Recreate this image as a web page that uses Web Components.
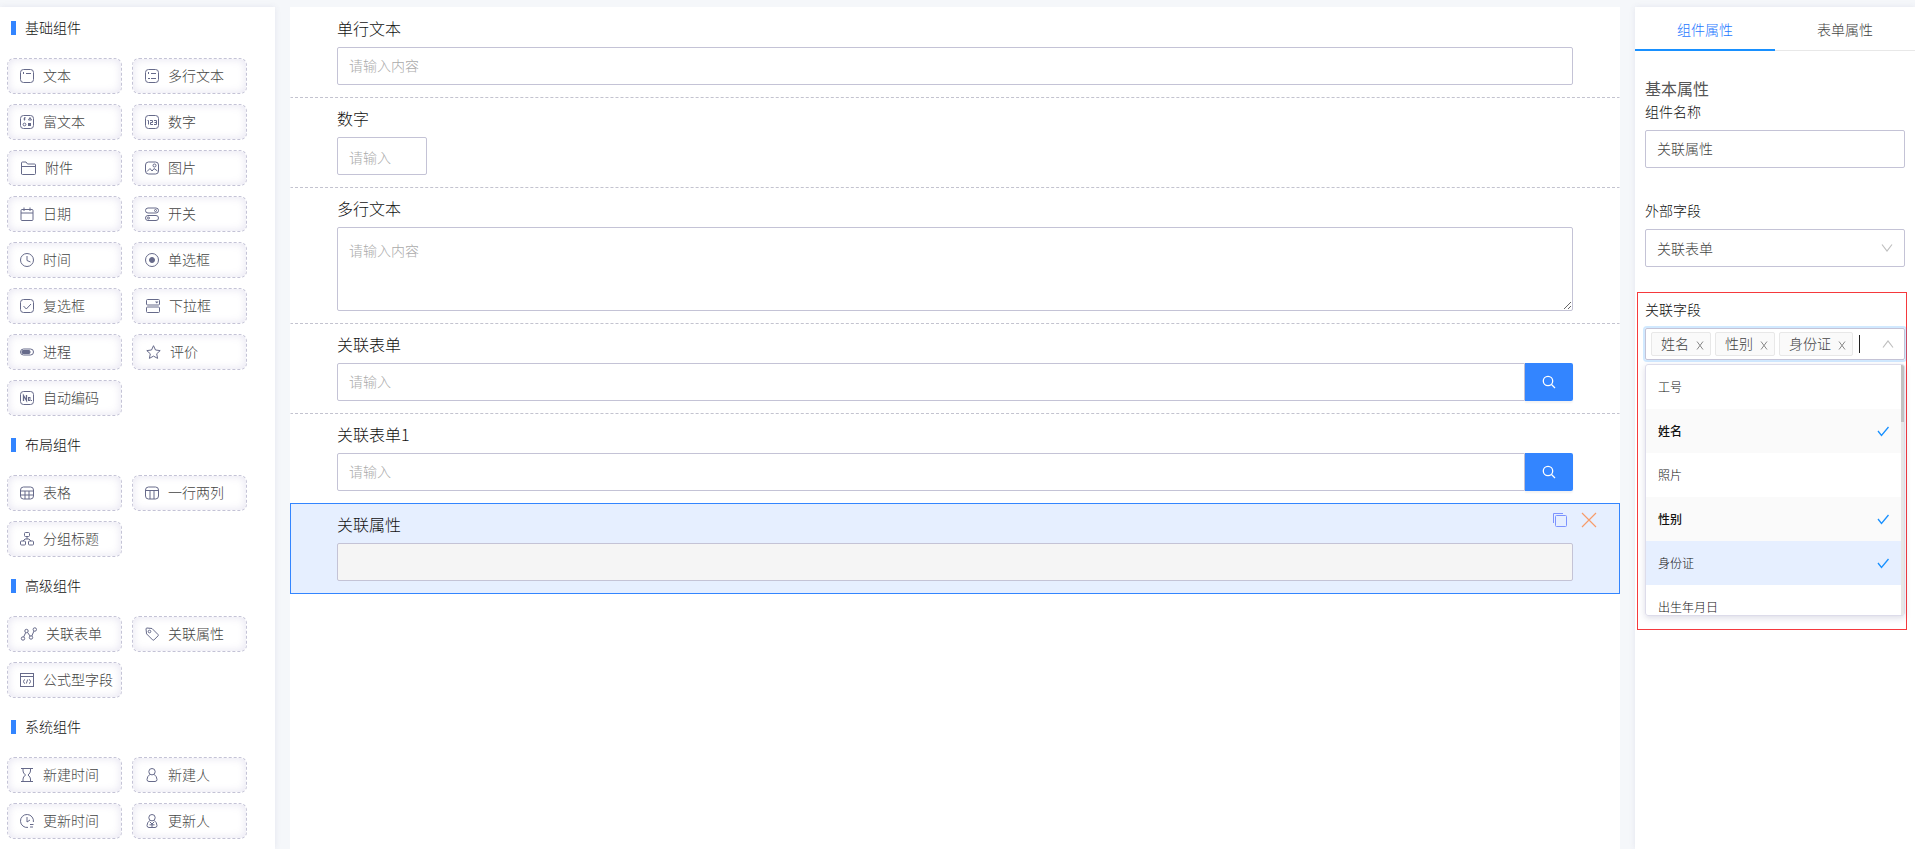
<!DOCTYPE html>
<html lang="zh-CN">
<head>
<meta charset="utf-8">
<title>表单设计</title>
<style>
* { box-sizing: border-box; }
body {
    margin: 0;
    background: #f5f7fa;
    font-family: "Noto Sans CJK SC", "Noto Sans", sans-serif;
    font-size: 14px;
    font-weight: 300;
    line-height: 20px;
    color: #111;
    --blue: #3385ff;
    --line: #c4c3d6;
    --text: #444;
}
</style>
</head>
<body>
<form-designer>
    <widget-group slot="widgets" title-text="基础组件">
        <widget-item icon="text">文本</widget-item>
        <widget-item icon="lines">多行文本</widget-item>
        <widget-item icon="rich">富文本</widget-item>
        <widget-item icon="number">数字</widget-item>
        <widget-item icon="folder">附件</widget-item>
        <widget-item icon="image">图片</widget-item>
        <widget-item icon="date">日期</widget-item>
        <widget-item icon="switch">开关</widget-item>
        <widget-item icon="clock">时间</widget-item>
        <widget-item icon="radio">单选框</widget-item>
        <widget-item icon="check">复选框</widget-item>
        <widget-item icon="select">下拉框</widget-item>
        <widget-item icon="progress">进程</widget-item>
        <widget-item icon="star">评价</widget-item>
        <widget-item icon="code">自动编码</widget-item>
    </widget-group>
    <widget-group slot="widgets" title-text="布局组件">
        <widget-item icon="table">表格</widget-item>
        <widget-item icon="columns">一行两列</widget-item>
        <widget-item icon="group">分组标题</widget-item>
    </widget-group>
    <widget-group slot="widgets" title-text="高级组件">
        <widget-item icon="relation">关联表单</widget-item>
        <widget-item icon="tag">关联属性</widget-item>
        <widget-item icon="formula">公式型字段</widget-item>
    </widget-group>
    <widget-group slot="widgets" title-text="系统组件">
        <widget-item icon="hourglass">新建时间</widget-item>
        <widget-item icon="user">新建人</widget-item>
        <widget-item icon="clockedit">更新时间</widget-item>
        <widget-item icon="useredit">更新人</widget-item>
    </widget-group>

    <form-item slot="canvas" type="input" label="单行文本" placeholder="请输入内容"></form-item>
    <form-item slot="canvas" type="number" label="数字" placeholder="请输入"></form-item>
    <form-item slot="canvas" type="textarea" label="多行文本" placeholder="请输入内容"></form-item>
    <form-item slot="canvas" type="search" label="关联表单" placeholder="请输入"></form-item>
    <form-item slot="canvas" type="search" label="关联表单1" placeholder="请输入"></form-item>
    <form-item slot="canvas" type="disabled" label="关联属性" selected></form-item>

    <property-tabs slot="props"></property-tabs>
    <property-form slot="props"></property-form>
</form-designer>

<script>
// [width, markup], every icon is 14px high
const ICONS = {
    text: [14, '<rect x=".5" y=".5" width="13" height="13" rx="3"/><path d="M3.5 3v2M6 4.5h5"/>'],
    lines: [14, '<rect x=".5" y=".5" width="13" height="13" rx="3"/><path d="M3.5 3v2M6 4.5h5M3 9.5h2M6 9.5h5"/>'],
    rich: [14, '<rect x=".5" y=".5" width="13" height="13" rx="3"/><path d="M5.5 2.5h-1v3M3.5 4h2M8.500 5l1.500-2.500L11.500 5z"/><circle cx="4.500" cy="9.500" r="1.400"/><rect x="8.500" y="8.500" width="2" height="2" fill="currentColor"/>'],
    number: [14, '<rect x=".5" y=".5" width="13" height="13" rx="3"/><path d="M2.500 5.500h1v4M5 5.500h2.500v2h-2v2H8M9 5.500h2.500v4H9M9.500 7.500h2"/>'],
    folder: [16, '<path d="M1.500 13V2q0-1 1-1h3.500l1.500 2h7q1 0 1 1v8.500q0 1-1 1h-12q-1 0-1-1zM1.500 5.500h14"/>'],
    image: [14, '<rect x=".5" y="1" width="13" height="12" rx="3"/><circle cx="9.500" cy="4.500" r="1.500"/><path d="M2 10.500l3-3 2 2.500 1-1 1-1.500 3.500 2.500"/>'],
    date: [14, '<rect x="1" y="2.500" width="12" height="11" rx="1"/><path d="M1 6h12M4 .5v3.500M10 .5v3.500"/>'],
    switch: [14, '<rect x=".5" y="1" width="13" height="5" rx="2.500"/><rect x=".5" y="8.500" width="13" height="5" rx="2.500"/><circle cx="10.500" cy="3.500" r="1"/><circle cx="3.500" cy="11" r="1"/>'],
    clock: [14, '<circle cx="7" cy="7" r="6.500"/><path d="M7 3v4.500l3.500 1.500"/>'],
    radio: [14, '<circle cx="7" cy="7" r="6.500"/><circle cx="7" cy="7" r="2.500" fill="currentColor"/>'],
    check: [14, '<rect x=".5" y=".5" width="13" height="13" rx="3"/><path d="M3.500 7l2.800 3 4.700-5"/>'],
    select: [15, '<rect x="1.500" y=".5" width="13" height="5.500" rx="1"/><rect x="1.500" y="8" width="13" height="5.500" rx="1"/><path fill="currentColor" stroke="none" d="M10 2.500h3.500l-1.700 2z"/>'],
    progress: [14, '<rect x=".5" y="4" width="13" height="6" rx="3"/><rect x="2" y="5.500" width="8" height="3" rx="1" fill="currentColor"/>'],
    star: [16, '<path d="M8.500 .7l2 4.300 4.700.6-3.500 3.200.9 4.600-4.100-2.300-4.100 2.300.9-4.600-3.500-3.200 4.700-.6z"/>'],
    code: [14, '<rect x=".5" y=".5" width="13" height="13" rx="3"/><path stroke-width="1.300" d="M3.500 10V4.500l3 5V4"/><rect x="8.500" y="6.500" width="1.500" height="3"/><path d="M11 9.500h1"/>'],
    table: [14, '<rect x=".5" y="1" width="13" height="12" rx="3"/><path d="M.5 5h13M.5 9h13M5 5v8M9 5v8"/>'],
    columns: [14, '<rect x=".5" y="1" width="13" height="12" rx="3"/><path d="M.5 4.500h13M5 4.500v8.500M9 4.500v8.500"/>'],
    group: [14, '<rect x="4.500" y=".5" width="5" height="4" rx="1"/><rect x=".5" y="9" width="5" height="4" rx="1"/><rect x="8.500" y="9" width="5" height="4" rx="1"/><path d="M7 4.500v2.500M3 9l2-2h4l2 2"/>'],
    relation: [17, '<circle cx="3" cy="11.500" r="1.700"/><circle cx="6.500" cy="4" r="1.700"/><circle cx="11" cy="10.500" r="1.700"/><circle cx="14.800" cy="2.500" r="1.700"/><path d="M3.700 9.900l2-4.300M7.500 5.400l2.700 3.800M11.800 9l2.200-5"/>'],
    tag: [14, '<path d="M1 2q0-1 1-1l5 .5 6 6q.7.7 0 1.400l-4 4q-.7.7-1.400 0l-6-6z"/><circle cx="4.500" cy="4.500" r="1.300"/>'],
    formula: [14, '<rect x=".5" y=".5" width="13" height="13"/><path d="M.5 3.500h13M5 6.500q-1.500.5-1.500 2t1.500 2M9 6.500q1.500.5 1.500 2t-1.500 2M7.700 6.500l-1.400 4"/>'],
    hourglass: [14, '<path d="M1 .5h12M1 13.500h12M3 .5v2.500q0 2 2.500 4-2.500 2-2.500 4v2.500M10.500 .5v2.500q0 2-2.500 4 2.500 2 2.500 4v2.500"/>'],
    user: [14, '<circle cx="7" cy="3.700" r="3.200"/><path d="M5 6.300Q2 8.500 2 11.500q0 2 2 2h6q2 0 2-2 0-3-3-5.200"/>'],
    clockedit: [14, '<path d="M8 13.400A6.500 6.500 0 1 1 13.400 8M7 3v5l3-2M10 10.500h3.500M10 13h3"/>'],
    useredit: [14, '<circle cx="7" cy="3.700" r="3.200"/><path d="M5 6.300Q2 8.500 2 11.500q0 2 2 2h6q2 0 2-2 0-3-3-5.200M5 8l2 2 2-2M7 9v4M4.500 10.800h5"/>']
};

const CONTROL = `
    * { box-sizing: border-box; }
    button, input, textarea, select { font: inherit; }
    input, textarea, select {
        display: block;
        width: 100%;
        height: 38px;
        margin: 0;
        padding: 0 11px 2px;
        border: 1px solid var(--line);
        border-radius: 2px;
        background: #fff;
        color: var(--text);
        outline: none;
    }
    ::placeholder { color: #aaa; opacity: 1; }
`;

class FormDesigner extends HTMLElement {
    constructor() {
        super();
        this.attachShadow({ mode: "open" }).innerHTML = `
<style>
    :host {
        display: grid;
        grid-template-columns: 275px minmax(0, 1fr) 280px;
        gap: 15px;
        min-height: 100vh;
        padding-top: 7px;
        box-sizing: border-box;
    }
    aside, main { background: #fff; }
    aside { box-shadow: 0 0 6px rgba(80, 80, 140, .1); }
    .widgets { display: flex; flex-direction: column; gap: 8px; padding: 0 7px 8px; }
</style>
<aside class="widgets"><slot name="widgets"></slot></aside>
<main><slot name="canvas"></slot></main>
<aside><slot name="props"></slot></aside>`;
    }
}

class WidgetGroup extends HTMLElement {
    constructor() {
        super();
        this.attachShadow({ mode: "open" }).innerHTML = `
<style>
    :host { display: block; }
    h2 {
        display: flex;
        align-items: center;
        gap: 9px;
        height: 42px;
        margin: 0 4px 9px;
        font-size: 14px;
        font-weight: inherit;
    }
    h2::before { content: ""; width: 5px; height: 14px; background: var(--blue); }
    h2 span { padding-bottom: 2px; }
    .list { display: grid; grid-template-columns: 115px 115px; gap: 10px; }
</style>
<h2><span></span></h2>
<div class="list"><slot></slot></div>`;
    }
    connectedCallback() {
        this.shadowRoot.querySelector("span").textContent = this.getAttribute("title-text");
    }
}

class WidgetItem extends HTMLElement {
    connectedCallback() {
        const [width, shape] = ICONS[this.getAttribute("icon")];
        this.attachShadow({ mode: "open" }).innerHTML = `
<style>
    :host { display: block; }
    button {
        display: flex;
        align-items: center;
        gap: 9px;
        width: 100%;
        height: 36px;
        padding: 0 0 0 12px;
        border: 1px dashed var(--line);
        border-radius: 7px;
        background: #fff;
        box-shadow: inset 0 0 8px rgba(110, 100, 170, .18);
        color: var(--text);
        font: inherit;
        white-space: nowrap;
        cursor: move;
    }
    svg { flex: none; color: #666a8a; }
    span { padding-bottom: 2px; }
</style>
<button type="button">
    <svg width="${width}" height="14" viewBox="0 0 ${width} 14" fill="none" stroke="currentColor" aria-hidden="true">${shape}</svg>
    <span><slot></slot></span>
</button>`;
    }
}

class FormItem extends HTMLElement {
    connectedCallback() {
        const hint = this.getAttribute("placeholder") || "";
        const controls = {
            input: `<input id="c" type="text" placeholder="${hint}">`,
            number: `<input id="c" class="number" type="text" inputmode="numeric" placeholder="${hint}">`,
            textarea: `<textarea id="c" placeholder="${hint}"></textarea>`,
            search: `<div class="search"><input id="c" type="text" placeholder="${hint}">
                <button type="button" class="go" aria-label="搜索"><svg width="14" height="14" viewBox="0 0 14 14" fill="none" stroke="#fff" stroke-width="1.300"><circle cx="6" cy="6" r="4.700"/><path d="M9.500 9.500l3.500 3.500"/></svg></button></div>`,
            disabled: `<input id="c" type="text" disabled>`
        };
        this.attachShadow({ mode: "open" }).innerHTML = `
<style>
    ${CONTROL}
    :host {
        display: block;
        position: relative;
        box-sizing: border-box;
        margin-bottom: -1px;
        padding: 9px 46px 12px;
        border: 1px solid transparent;
        border-bottom: 1px dashed #c3c3cf;
    }
    :host([selected]) { border: 1px solid var(--blue); background: #e6efff; }
    label { display: block; margin-bottom: 8px; font-size: 16px; line-height: 22px; }
    .number { width: 90px; padding-top: 3px; }
    textarea { height: 84px; padding-top: 12px; resize: vertical; }
    input:disabled { background: #f5f5f5; }
    .search { display: flex; }
    .search input { border-radius: 2px 0 0 2px; }
    .go {
        display: flex;
        align-items: center;
        justify-content: center;
        flex: none;
        width: 48px;
        height: 38px;
        padding: 0;
        border: 0;
        border-radius: 0 2px 2px 0;
        background: var(--blue);
        box-shadow: 0 2px 2px rgba(0, 0, 0, .05);
    }
    .tools { display: none; position: absolute; top: 8px; right: 22px; gap: 13px; }
    :host([selected]) .tools { display: flex; }
    .tools button { display: flex; padding: 0; border: 0; background: none; }
</style>
<label for="c">${this.getAttribute("label")}</label>
${controls[this.getAttribute("type")]}
<div class="tools">
    <button type="button" aria-label="复制"><svg width="16" height="16" viewBox="0 0 16 16" fill="none" stroke="#7c93ff"><path d="M1.500 11V1.500H11"/><rect x="3.500" y="3.500" width="11" height="11" rx="1"/></svg></button>
    <button type="button" aria-label="删除"><svg width="16" height="16" viewBox="0 0 16 16" fill="none" stroke="#f79c6a" stroke-width="1.200"><path d="M1 1l14 14M15 1L1 15"/></svg></button>
</div>`;
    }
}

class PropertyTabs extends HTMLElement {
    constructor() {
        super();
        this.attachShadow({ mode: "open" }).innerHTML = `
<style>
    :host { display: block; }
    div { display: grid; grid-template-columns: 1fr 1fr; box-shadow: inset 0 -1px #e8e8e8; }
    button {
        height: 44px;
        padding: 2px 0 0;
        border: 0;
        border-bottom: 2px solid transparent;
        background: none;
        color: var(--text);
        font: inherit;
    }
    [aria-selected=true] { border-color: #1890ff; color: #1f78ff; }
</style>
<div role="tablist">
    <button type="button" role="tab" aria-selected="true">组件属性</button>
    <button type="button" role="tab" aria-selected="false">表单属性</button>
</div>`;
    }
}

class PropertyForm extends HTMLElement {
    constructor() {
        super();
        this.attachShadow({ mode: "open" }).innerHTML = `
<style>
    ${CONTROL}
    :host { display: block; padding: 26px 2px 0; }
    h3 { margin: 0 8px 2px; font-size: 16px; font-weight: 400; line-height: 22px; color: #555; }
    .field { margin: 0 8px 32px; }
    label { display: block; margin-bottom: 9px; line-height: 20px; }
    .select { display: grid; align-items: center; }
    .select > * { grid-area: 1 / 1; }
    .select svg { justify-self: end; margin-right: 12px; pointer-events: none; }
    select { appearance: none; padding: 0 11px; }
    /* pulls the outline up over the gap under the previous field */
    .marked { margin-top: -7px; padding: 6px 1px 13px 7px; border: 1px solid #f5393d; width: 270px; }
</style>
<h3>基本属性</h3>
<div class="field"><label for="name">组件名称</label><input id="name" type="text" value="关联属性"></div>
<div class="field">
    <label for="outer">外部字段</label>
    <div class="select">
        <select id="outer"><option>关联表单</option></select>
        <svg width="12" height="12" viewBox="0 0 12 12" fill="none" stroke="#bfbfbf" stroke-width="1.200"><path d="M1 2.500l5 6.500 5-6.500"/></svg>
    </div>
</div>
<div class="marked"><field-picker></field-picker></div>`;
    }
}

class FieldPicker extends HTMLElement {
    constructor() {
        super();
        const tags = ["姓名", "性别", "身份证"];
        const options = ["工号", "姓名", "照片", "性别", "身份证", "出生年月日"];
        this.attachShadow({ mode: "open" }).innerHTML = `
<style>
    * { box-sizing: border-box; }
    :host { display: block; }
    label { display: block; margin-bottom: 9px; line-height: 20px; }
    .box {
        display: flex;
        align-items: center;
        gap: 4px;
        height: 32px;
        padding: 0 10px 0 5px;
        border: 1px solid var(--line);
        border-radius: 2px;
        box-shadow: 0 0 0 2px rgba(24, 144, 255, .2);
    }
    .tag {
        display: flex;
        align-items: center;
        gap: 7px;
        height: 24px;
        padding: 0 6px 2px 9px;
        border: 1px solid #e8e8e8;
        border-radius: 2px;
        background: #fafafa;
        color: var(--text);
        white-space: nowrap;
    }
    .tag button { display: flex; padding: 4px 0 0; border: 0; background: none; }
    .caret { flex: none; width: 1px; height: 18px; margin-left: 2px; background: #222; }
    input { flex: 1; width: 0; min-width: 0; padding: 0; border: 0; outline: none; background: none; font: inherit; }
    .box > svg { flex: none; }
    .menu {
        display: grid;
        grid-template-columns: 1fr 3px;
        height: 252px;
        margin-top: 4px;
        overflow: hidden;
        border: 1px solid #dddcea;
        border-radius: 3px;
        box-shadow: 0 2px 6px rgba(60, 60, 120, .18);
    }
    ul { height: 250px; margin: 0; padding: 0; overflow: hidden; list-style: none; }
    li {
        display: flex;
        align-items: center;
        justify-content: space-between;
        height: 44px;
        padding: 0 12px;
        font-size: 12px;
    }
    li svg { display: none; }
    li[aria-selected=true] { background: #fafafa; font-weight: 500; }
    li[aria-selected=true] svg { display: block; }
    li.active[aria-selected=true] { background: #e6efff; font-weight: 300; }
    .bar { background: #e6e6e6; }
    .bar::before { content: ""; display: block; height: 57px; background: #c1c1c1; }
</style>
<label for="find">关联字段</label>
<div class="box">
    ${tags.map(t => `<span class="tag">${t}<button type="button" aria-label="移除"><svg width="8" height="9" viewBox="0 0 8 9" fill="none" stroke="#888"><path d="M1 .5l6 8M7 .5l-6 8"/></svg></button></span>`).join("")}
    <span class="caret"></span>
    <input id="find" type="text" role="combobox" aria-expanded="true" aria-controls="list">
    <svg width="12" height="12" viewBox="0 0 12 12" fill="none" stroke="#bfbfbf" stroke-width="1.200"><path d="M1 9.500l5-6.500 5 6.500"/></svg>
</div>
<div class="menu">
    <ul id="list" role="listbox" aria-multiselectable="true">
        ${options.map(o => `<li role="option" aria-selected="${tags.includes(o)}" class="${o === "身份证" ? "active" : ""}">${o}<svg width="12" height="12" viewBox="0 0 12 12" fill="none" stroke="#1890ff" stroke-width="1.300"><path d="M1 6l3.500 4.500L11.500 2"/></svg></li>`).join("")}
    </ul>
    <div class="bar"></div>
</div>`;
    }
}

customElements.define("form-designer", FormDesigner);
customElements.define("widget-group", WidgetGroup);
customElements.define("widget-item", WidgetItem);
customElements.define("form-item", FormItem);
customElements.define("property-tabs", PropertyTabs);
customElements.define("field-picker", FieldPicker);
customElements.define("property-form", PropertyForm);
</script>
</body>
</html>
